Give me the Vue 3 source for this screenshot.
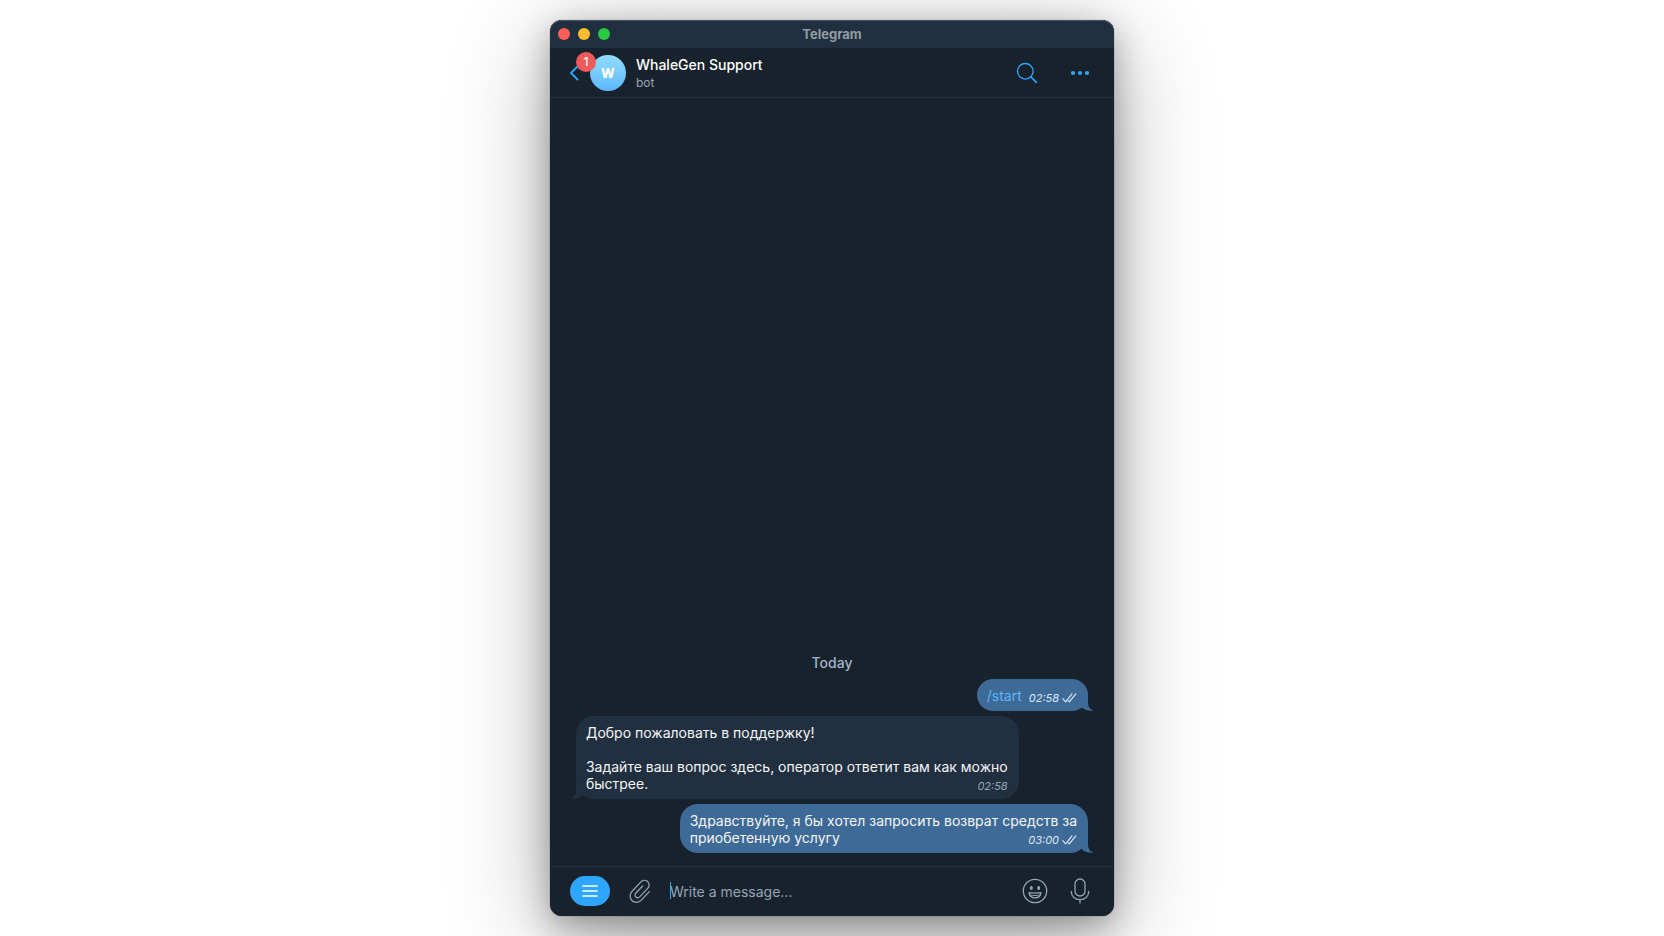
<script setup>
import { ref } from 'vue'

const draft = ref('')

const messages = [
  { id: 1, out: true, command: true, lines: ['/start'], time: '02:58' },
  {
    id: 2,
    out: false,
    lines: [
      'Добро пожаловать в поддержку!',
      '',
      'Задайте ваш вопрос здесь, оператор ответит вам как можно',
      'быстрее.'
    ],
    time: '02:58'
  },
  {
    id: 3,
    out: true,
    lines: ['Здравствуйте, я бы хотел запросить возврат средств за', 'приобетенную услугу'],
    time: '03:00'
  }
]
</script>

<template>
  <div class="desktop">
    <main class="window">
      <!-- Title bar -->
      <div class="titlebar">
        <div class="lights">
          <button class="light red" aria-label="Close"></button>
          <button class="light yellow" aria-label="Minimize"></button>
          <button class="light green" aria-label="Zoom"></button>
        </div>
        <span class="app-name">Telegram</span>
      </div>

      <!-- Chat header -->
      <header class="chat-header">
        <button class="back" aria-label="Back">
          <svg width="10" height="16" viewBox="0 0 10 16">
            <path d="M7.5 1.5 1 8l6.500 6.500" fill="none" stroke="#2ea6ff" stroke-width="1.8" stroke-linecap="round" stroke-linejoin="round"/>
          </svg>
          <span class="badge">1</span>
        </button>
        <div class="avatar">W</div>
        <div class="peer">
          <h1 class="peer-name">WhaleGen Support</h1>
          <p class="peer-status">bot</p>
        </div>
        <button class="icon-btn" aria-label="Search">
          <svg width="22" height="22" viewBox="0 0 22 22" fill="none" stroke="#2ea6ff" stroke-linecap="round">
            <circle cx="9.3" cy="9.3" r="7.8" stroke-width="1.3"/>
            <path d="m15 15 5.4 5.4" stroke-width="1.7"/>
          </svg>
        </button>
        <button class="icon-btn" aria-label="More">
          <svg width="20" height="6" viewBox="0 0 20 6" fill="#2ea6ff">
            <circle cx="3" cy="3" r="2.1"/>
            <circle cx="10" cy="3" r="2.1"/>
            <circle cx="17" cy="3" r="2.1"/>
          </svg>
        </button>
      </header>

      <!-- Messages -->
      <section class="history">
        <div class="day">Today</div>
        <div
          v-for="msg in messages"
          :key="msg.id"
          class="bubble"
          :class="msg.out ? 'out' : 'in'"
        >
          <p v-for="(line, i) in msg.lines.slice(0, -1)" :key="i" class="line">{{ line }}</p>
          <div class="last-line">
            <a v-if="msg.command" href="#" class="command">{{ msg.lines.at(-1) }}</a>
            <p v-else>{{ msg.lines.at(-1) }}</p>
            <span class="meta">
              <time>{{ msg.time }}</time>
              <svg v-if="msg.out" width="15" height="10" viewBox="0 0 15 10">
                <path d="M.8 5.6 3.7 8.8 10 .9M7.3 8.8 13.8.9M7.3 8.8 6.5 7.9" fill="none" stroke="currentColor" stroke-width="1.2" stroke-linecap="round" stroke-linejoin="round"/>
              </svg>
            </span>
          </div>
          <svg class="tail" width="12" height="16" viewBox="0 0 12 16">
            <path d="M0 0h6v8c0 3.6 2 6.4 5.6 7.6C7.2 16.4 3.2 15.4 0 12.6z" fill="currentColor"/>
          </svg>
        </div>
      </section>

      <!-- Composer -->
      <footer class="composer">
        <button class="menu-btn" aria-label="Menu">
          <svg width="16" height="14" viewBox="0 0 16 14">
            <path d="M1 2h14M1 7h14M1 12h14" stroke="#fff" stroke-width="1.7" stroke-linecap="round"/>
          </svg>
        </button>
        <button class="icon-btn" aria-label="Attach">
          <svg width="22" height="24" viewBox="0 0 22 24" fill="none" stroke="#93a5b7" stroke-width="1.3" stroke-linecap="round" stroke-linejoin="round">
            <path d="m20.2 12.6-7.6 8.3c-2.7 2.9-6.9 3.2-9.500.8s-2.7-6.5 0-9.4l8.6-9.2c1.9-2.1 5-2.3 7-.5 1.9 1.8 1.9 4.8 0 6.8L10.9 17.6c-1.2 1.3-2.9 1.4-4 .4s-1.1-2.7.1-4l6.600-7"/>
          </svg>
        </button>
        <div class="field">
          <span class="caret"></span>
          <input v-model="draft" class="input" type="text" placeholder="Write a message..." aria-label="Write a message">
        </div>
        <button class="icon-btn" aria-label="Emoji">
          <svg width="26" height="26" viewBox="0 0 26 26" fill="none" stroke="#93a5b7" stroke-width="1.3">
            <circle cx="13" cy="13" r="11.7"/>
            <ellipse cx="9.3" cy="10" rx="1.5" ry="2" fill="#93a5b7" stroke="none"/>
            <ellipse cx="16.7" cy="10" rx="1.5" ry="2" fill="#93a5b7" stroke="none"/>
            <path d="M7 14.600c4 .6 8 .6 12 0-.3 3.100-2.700 5.200-6 5.200s-5.700-2.100-6-5.200z" stroke-linejoin="round"/>
            <path d="M7.800 17c3.500.7 6.900.7 10.400 0" stroke-width="1"/>
          </svg>
        </button>
        <button class="icon-btn" aria-label="Record voice message">
          <svg width="20" height="26" viewBox="0 0 20 26" fill="none" stroke="#93a5b7" stroke-width="1.3" stroke-linecap="round">
            <rect x="5" y="1" width="10" height="17" rx="5"/>
            <path d="M1.200 13.5c.2 4.8 4 8.2 8.8 8.2s8.6-3.4 8.8-8.2M10 21.7V25"/>
          </svg>
        </button>
      </footer>
    </main>
  </div>
</template>

<style>
body { background: #fff; }
</style>

<style scoped>
*, *::after, *::before { box-sizing: border-box; margin: 0; padding: 0; }

.desktop {
  display: flex; justify-content: center;
  min-height: 100vh; padding: 20px 0;
  font-family: Inter, 'Noto Sans', sans-serif;
  font-size: 14px; line-height: 17px; color: #f5f5f5;
  overflow: hidden;
}
.window {
  display: flex; flex-direction: column;
  width: 33.9%; min-width: 480px;
  background: #18222c; border-radius: 12px;
  box-shadow:
    0 0 1px rgba(0, 0, 0, 0.8),
    0 10px 32px rgba(0, 0, 0, 0.3),
    0 22px 100px rgba(0, 0, 0, 0.32);
}
button { border: none; background: none; cursor: pointer; font: inherit; color: inherit; }
svg { display: block; }

/* Title bar */
.titlebar {
  display: grid; grid-template-columns: 1fr auto 1fr; align-items: center;
  height: 28px; padding: 0 8px;
  background: #213040; border-radius: 12px 12px 0 0;
  box-shadow: inset 0 1px 0 #4a5866;
}
.lights { display: flex; gap: 8px; }
.light { width: 12px; height: 12px; border-radius: 50%; }
.red { background: #ff5f57; }
.yellow { background: #febc2e; }
.green { background: #28c840; }
.app-name { font-size: 13px; line-height: 16px; font-weight: 700; color: #939ba3; }

/* Chat header */
.chat-header {
  display: flex; align-items: center;
  height: 50px; padding: 0 24px 0 20px;
  border-bottom: 1px solid #213040;
}
.back { position: relative; width: 20px; }
.badge {
  position: absolute; left: 6px; top: -13px; z-index: 1;
  width: 20px; height: 20px; border-radius: 50%;
  background: #ef5b5b; color: #fff;
  font-size: 12px; line-height: 20px; font-weight: 500; text-align: center;
}
.avatar {
  width: 36px; height: 36px; border-radius: 50%;
  background: linear-gradient(#92dcff, #5eb8ff);
  font-size: 13px; font-weight: 800; line-height: 36px; text-align: center; color: #fff;
}
.peer { flex: 1; padding: 2px 0 0 10px; }
.peer-name { font-size: 14px; line-height: 18px; font-weight: 500; color: #fff; }
.peer-status { font-size: 12px; line-height: 17px; color: #93a5b7; }
.chat-header .icon-btn + .icon-btn { margin-left: 32px; }

/* Messages */
.history {
  flex: 1; display: flex; flex-direction: column; justify-content: flex-end;
  gap: 5px; padding: 13px 26px;
}
.day { align-self: center; padding-bottom: 3px; font-weight: 500; color: #a3b4c6; }
.bubble {
  position: relative; max-width: 88%;
  padding: 8px 11px 7px 10px; border-radius: 18px;
}
.in { align-self: flex-start; background: #213040; }
.out { align-self: flex-end; background: #3e6a97; }
.line { min-height: 17px; }
.last-line { display: flex; justify-content: space-between; align-items: flex-end; gap: 7px; }
.command { color: #5eb5f7; text-decoration: none; }
.meta {
  display: flex; align-items: center; gap: 3px;
  height: 17px; padding-top: 5px;
  font-size: 11px; line-height: 12px; font-style: italic; color: #dbe7f3;
}
.in .meta { color: #93a5b7; }
.tail { position: absolute; bottom: 0; }
.out .tail { right: -6px; color: #3e6a97; }
.in .tail { left: -6px; color: #213040; transform: scaleX(-1); }

/* Composer */
.composer {
  display: flex; align-items: center;
  height: 50px; padding: 0 24px 2px 20px;
  border-top: 1px solid #213040;
}
.menu-btn {
  display: flex; align-items: center; justify-content: center;
  width: 40px; height: 30px; margin-right: 19px;
  background: #2ea6ff; border-radius: 15px;
}
.field { position: relative; flex: 1; margin-left: 19px; padding-top: 2px; }
.caret {
  position: absolute; left: 0; top: 2px;
  width: 1px; height: 17px; background: #2ea6ff;
}
.input {
  display: block; width: 100%; height: 20px;
  border: none; outline: none; background: none;
  font: inherit; color: #f5f5f5; caret-color: #2ea6ff;
}
.input::placeholder { color: #93a5b7; opacity: 1; }
.composer .field ~ .icon-btn + .icon-btn { margin-left: 22px; }
</style>
